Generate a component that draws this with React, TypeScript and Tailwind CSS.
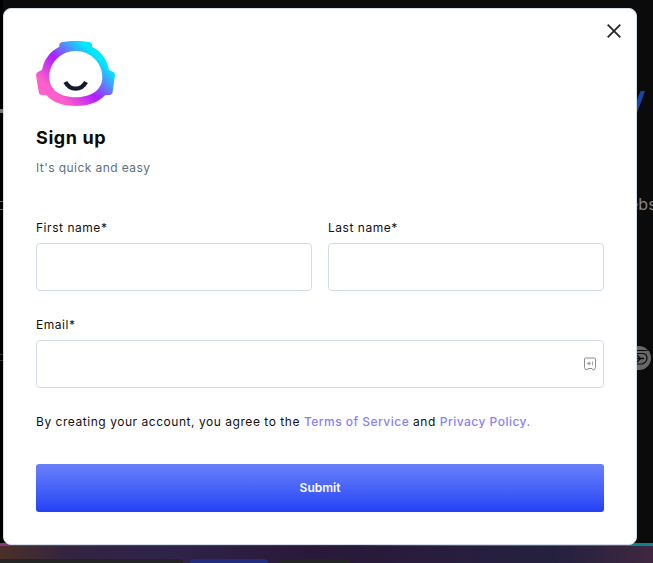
import type { ReactNode } from 'react';

function Logo() {
  return (
    <svg viewBox="30 30 240 201" className="block h-[67px] w-20" fill="none">
      <defs>
        <linearGradient id="helmet" gradientUnits="userSpaceOnUse" x1="82" y1="218" x2="218" y2="72">
          <stop offset="0.12" stopColor="#ff5fca" />
          <stop offset="0.5" stopColor="#b01cff" />
          <stop offset="0.74" stopColor="#5688ff" />
          <stop offset="0.95" stopColor="#00e8ff" />
        </linearGradient>
      </defs>
      <path
        fill="url(#helmet)"
        fillRule="evenodd"
        d="M100 50V44Q100 39 106 37C120 34 134 33 149 33S178 34 192 37Q198 39 198 44V50C226 64 243 88 249 120L261 125Q268 128 267 135L260 186Q259 194 250 195L237 196C215 220 183 228 149 228S83 220 61 196L48 195Q39 194 38 186L30 135Q30 128 37 125L48 120C54 88 72 64 100 50ZM149 63C104 63 70 98 70 142C70 184 108 202 149 202S229 184 229 142C229 98 194 63 149 63Z"
      />
      <path d="M118 156Q129 176 149 176T180 156" stroke="#131c2e" strokeWidth="13" />
    </svg>
  );
}

function VaultIcon() {
  return (
    <svg viewBox="0 0 14 14" className="size-3.5" fill="none" stroke="#8c8c8c">
      <path d="M5 11.5H9L9.8 12.8H11.2L11.7 11.5Q12.5 11.5 12.5 10.5V2Q12.5 1 11.5 1H2.5Q1.5 1 1.5 2V10.5Q1.5 11.5 2.3 11.5L2.8 12.8H4.2Z" />
      <path d="M4 6.5H8M6 4.5V8.5M4.8 5.3L7.2 7.7M7.2 5.3L4.8 7.7" strokeWidth="0.7" />
      <path d="M9.5 4.5V8.5" strokeWidth="0.8" />
    </svg>
  );
}

function Field({ label, icon }: { label: string; icon?: ReactNode }) {
  return (
    <label className="block">
      <span className="block h-5 leading-5">{label}</span>
      <span className="mt-[5px] flex h-12 items-center rounded border border-[#d3dce6] bg-white pr-[6px]">
        <input className="h-full min-w-0 flex-1 px-3 outline-none" />
        {icon}
      </span>
    </label>
  );
}

function Backdrop() {
  return (
    <div className="flex h-full flex-col bg-[#0b0b0b]">
      <div className="flex h-[543px] shrink-0 justify-between text-[#858585]">
        <div className="w-[3px] overflow-hidden bg-black">
          <div className="mt-[109px] h-1 bg-[#777]" />
          <div className="mt-[88px] h-[9px] w-[3px] border-y border-[#666]" />
          <div className="mt-[144px] h-[7px] border-y border-[#333]" />
        </div>
        <div className="w-[17px] overflow-hidden">
          <svg viewBox="0 0 17 23" className="mt-[91px] h-[23px] w-[17px]">
            <path d="M4.5 0H9L1 22H-4Z" fill="#1946a4" />
          </svg>
          <div className="-ml-[7px] mt-[80px] w-8 text-base leading-5">ebs</div>
          <svg viewBox="0 0 17 24" className="mt-[132px] h-6 w-[17px]" fill="none">
            <circle cx="3" cy="12" r="12" fill="#686868" />
            <path d="M-3 4.5H9Q12 4.5 13 3M-3 7.5H6Q11 7.5 11 12T6 18H-3" stroke="#0b0b0b" strokeWidth="1.2" />
            <path d="M-2 12.5H8M1 9L4.5 12.5L1 16" stroke="#0b0b0b" strokeWidth="1.4" />
          </svg>
        </div>
      </div>
      <div className="h-[3px] shrink-0 bg-linear-to-r from-[#8b327e] via-[#5a1674] via-55% to-[#128288] to-80%" />
      <div className="flex h-[17px] items-end bg-[linear-gradient(90deg,#4b3028_0%,#342440_10%,#30234a_25%,#2a1838_48%,#291c3d_65%,#24213f_85%,#40273f_100%)]">
        <div className="h-1 w-[183px] rounded-tr-lg bg-[#242424]" />
        <div className="ml-[7px] h-1 w-[78px] rounded-t-xl bg-[#202c80]" />
        <div className="ml-[12px] h-1 w-[70px] rounded-t-lg bg-[#242424]" />
      </div>
    </div>
  );
}

export default function App() {
  return (
    <main className="relative h-[563px] w-[653px] overflow-hidden font-['Inter',sans-serif] text-xs text-[#111]">
      <Backdrop />
      <section
        role="dialog"
        aria-label="Sign up"
        className="absolute left-[3px] top-2 h-[537px] w-[634px] rounded-lg border border-[#d3dee8] bg-white px-8 pt-[31px] tracking-[0.54px]"
      >
        <button aria-label="Close" className="absolute right-[15px] top-[15px]">
          <svg viewBox="0 0 14 14" className="size-3.5" fill="none" stroke="#252525" strokeWidth="1.8">
            <path d="M0.7 0.7L13.3 13.3M13.3 0.7L0.7 13.3" />
          </svg>
        </button>
        <Logo />
        <h1 className="mt-[19px] text-lg font-bold leading-6 tracking-[0.6px] text-[#0b0b0b]">Sign up</h1>
        <p className="mt-2 leading-5 tracking-[0.43px] text-[#5b7083]">It's quick and easy</p>

        <form onSubmit={(e) => e.preventDefault()}>
          <div className="mt-10 grid grid-cols-2 gap-4">
            <Field label="First name*" />
            <Field label="Last name*" />
          </div>
          <div className="mt-6">
            <Field label="Email*" icon={<VaultIcon />} />
          </div>
          <p className="mt-6 whitespace-nowrap leading-5">
            By creating your account, you agree to the{' '}
            <a href="#terms" className="font-medium tracking-[0.48px] text-[#8782f5]">Terms of Service</a> and{' '}
            <a href="#privacy" className="font-medium tracking-[0.48px] text-[#8782f5]">Privacy Policy.</a>
          </p>
          <button className="mt-8 h-12 w-full rounded-[3px] bg-linear-to-b from-[#6b80fb] to-[#263ff4] font-semibold tracking-normal text-white">
            Submit
          </button>
        </form>
      </section>
    </main>
  );
}
